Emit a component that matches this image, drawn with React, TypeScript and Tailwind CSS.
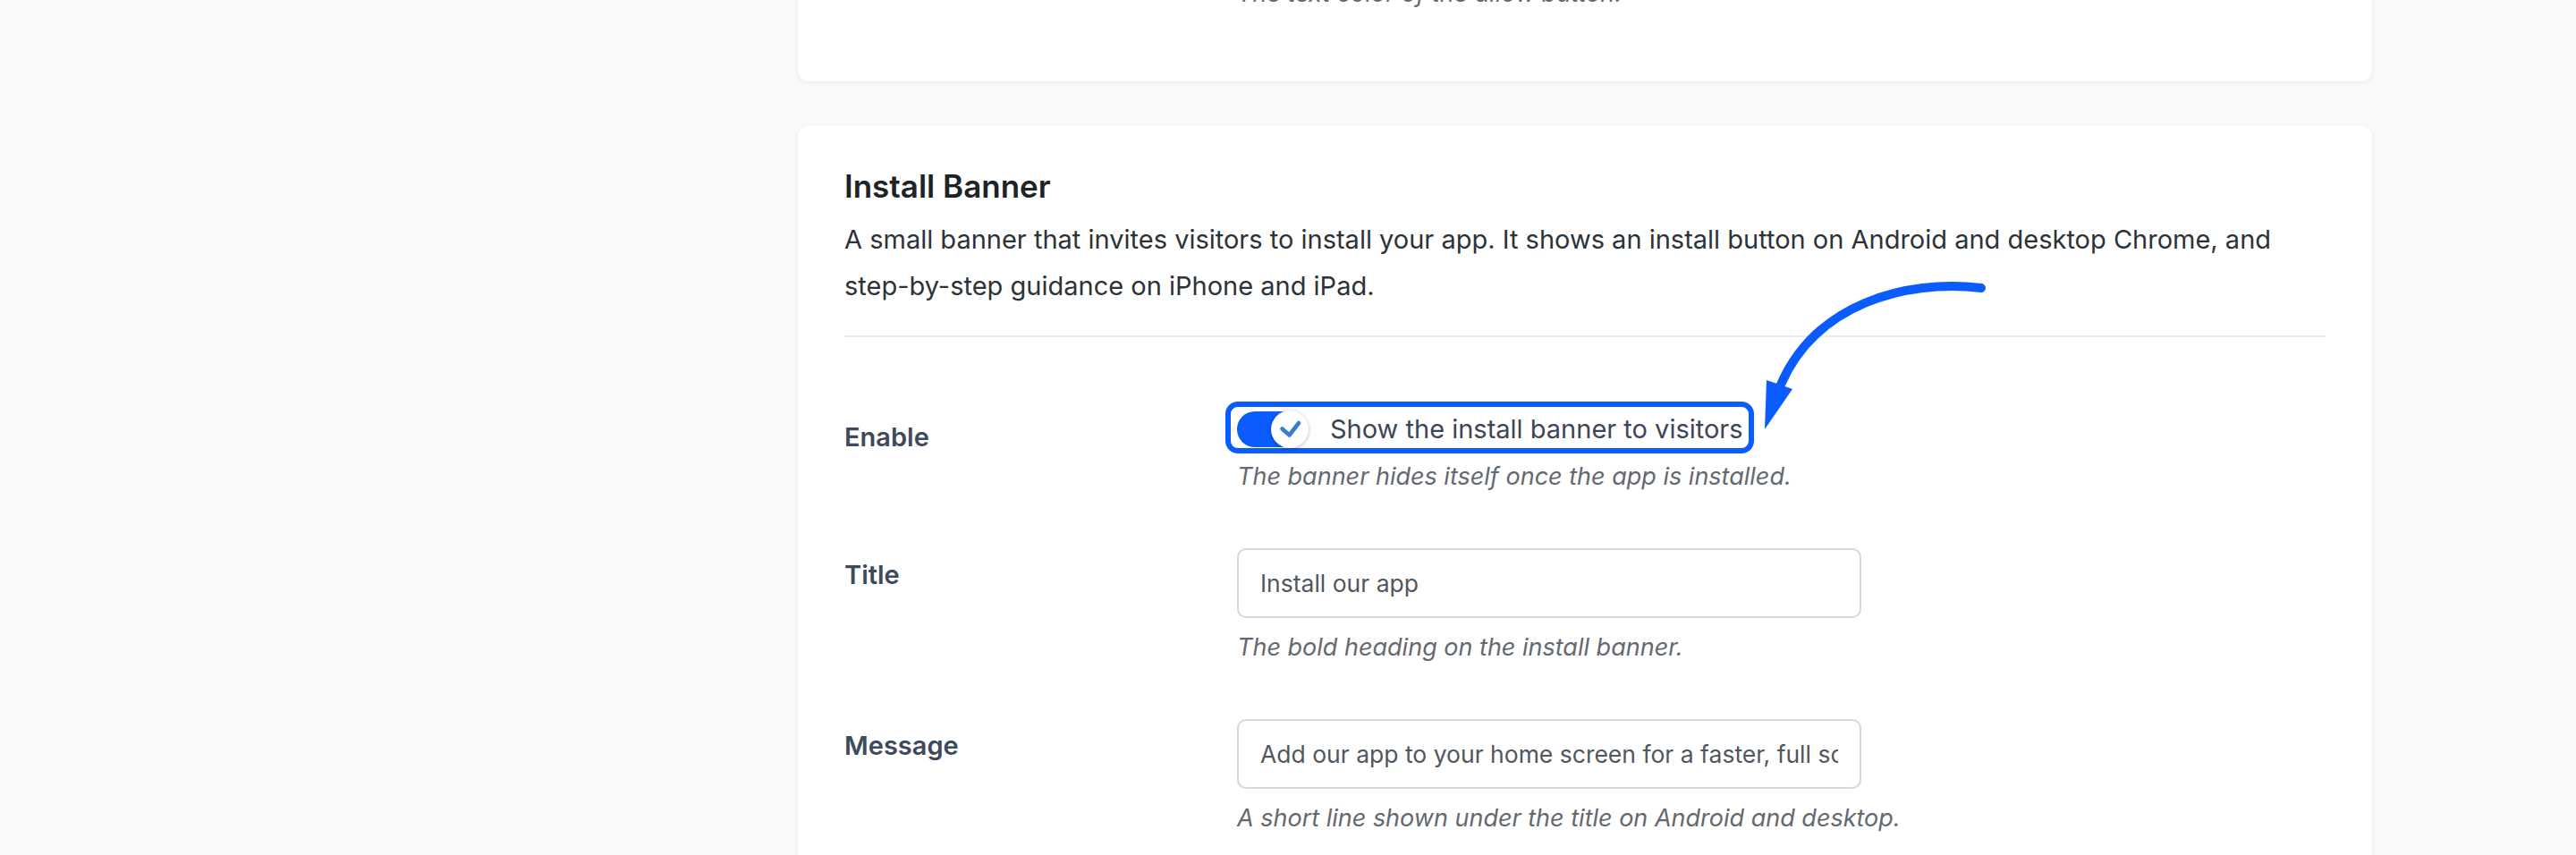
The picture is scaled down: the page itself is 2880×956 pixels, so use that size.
import React from "react";

function Toggle() {
  return (
    <div className="relative flex h-[42px] w-fit items-center">
      <span className="pointer-events-none absolute left-[-13px] right-[-12px] top-[-10px] bottom-[-6px] rounded-[14px] border-[6px] border-[#0a5cff]" />
      <span className="relative block h-[40px] w-[78px] rounded-full bg-[#0a5cff]">
        <span className="absolute left-[38px] top-[-1px] flex h-[42px] w-[42px] items-center justify-center rounded-full bg-white shadow-[0_1px_4px_rgba(0,0,0,0.28)]">
          <svg width="42" height="42" viewBox="0 0 42 42" fill="none">
            <path d="M12.5 20.5L20.5 27.5L31 14" stroke="#3a7cd0" strokeWidth="4.5" strokeLinecap="round" strokeLinejoin="round" />
          </svg>
        </span>
      </span>
      <span className="ml-[26px] text-[29px] leading-[40px] text-[#3c4657]">Show the install banner to visitors</span>
    </div>
  );
}

function Label({ children }: { children: React.ReactNode }) {
  return (
    <div className="pt-[40px] text-[29px] leading-[40px] font-semibold text-[#3d4a5c]">{children}</div>
  );
}

function Help({ children, className = "" }: { children: React.ReactNode; className?: string }) {
  return <p className={"text-[27px] leading-[40px] italic text-[#646970] " + className}>{children}</p>;
}

function TextInput({ value }: { value: string }) {
  return (
    <input
      type="text"
      readOnly
      defaultValue={value}
      className="block h-[78px] w-[698px] rounded-[10px] border-2 border-[#d6d7da] bg-white px-[24px] text-[26.5px] text-[#50575e] outline-none font-['Inter',sans-serif]"
    />
  );
}

export default function App() {
  return (
    <div className="min-h-screen overflow-hidden bg-[#f8fafc] font-['Inter','Noto_Sans',sans-serif]">
      <div className="ml-[892px] flex w-[1760px] flex-col">
        {/* previous card (cut off at top) */}
        <div className="mt-[-60px] rounded-xl bg-white pl-[52px] pt-[33px] pb-[78px] shadow-[0_2px_6px_rgba(15,23,42,0.06),0_0_1px_rgba(15,23,42,0.08)]">
          <div className="pl-[439px]">
            <Help>The text color of the allow button.</Help>
          </div>
        </div>

        {/* Install Banner card */}
        <div className="relative mt-[49px] rounded-xl bg-white px-[52px] pt-[46px] pb-[40px] shadow-[0_2px_6px_rgba(15,23,42,0.06),0_0_1px_rgba(15,23,42,0.08)]">
          <h2 className="text-[35px] leading-[44px] font-semibold text-[#1d2327]">Install Banner</h2>
          <p className="mt-[12px] text-[29px] leading-[52px] text-[#2c3338]">
            A small banner that invites visitors to install your app. It shows an install button on Android and desktop Chrome, and{" "}
            <span className="whitespace-nowrap">step-by-step</span> guidance on iPhone and iPad.
          </p>
          <div className="mt-[29px] h-[2px] bg-[#e9eaec]" />

          <div className="mt-[52px] grid grid-cols-[439px_1fr]">
            <Label>Enable</Label>
            <div className="py-[30px]">
              <Toggle />
              <Help className="mt-[12px]">The banner hides itself once the app is installed.</Help>
            </div>

            <Label>Title</Label>
            <div className="py-[30px]">
              <TextInput value="Install our app" />
              <Help className="mt-[13px]">The bold heading on the install banner.</Help>
            </div>

            <Label>Message</Label>
            <div className="py-[30px]">
              <TextInput value="Add our app to your home screen for a faster, full screen experience." />
              <Help className="mt-[13px]">A short line shown under the title on Android and desktop.</Help>
            </div>

            <Label>Button text</Label>
            <div className="py-[30px]">
              <TextInput value="Install" />
              <Help className="mt-[13px]">The label on the install button.</Help>
            </div>
          </div>

          <svg
            className="pointer-events-none absolute left-0 top-0 overflow-visible"
            width="1760"
            height="400"
            viewBox="0 0 1760 400"
            fill="none"
          >
            <path d="M1323 182 C1238 172 1138 200 1099 290" stroke="#0a5cff" strokeWidth="10" strokeLinecap="round" fill="none" />
            <polygon points="1083,285 1112,295 1081,340" fill="#0a5cff" />
          </svg>
        </div>
      </div>
    </div>
  );
}
